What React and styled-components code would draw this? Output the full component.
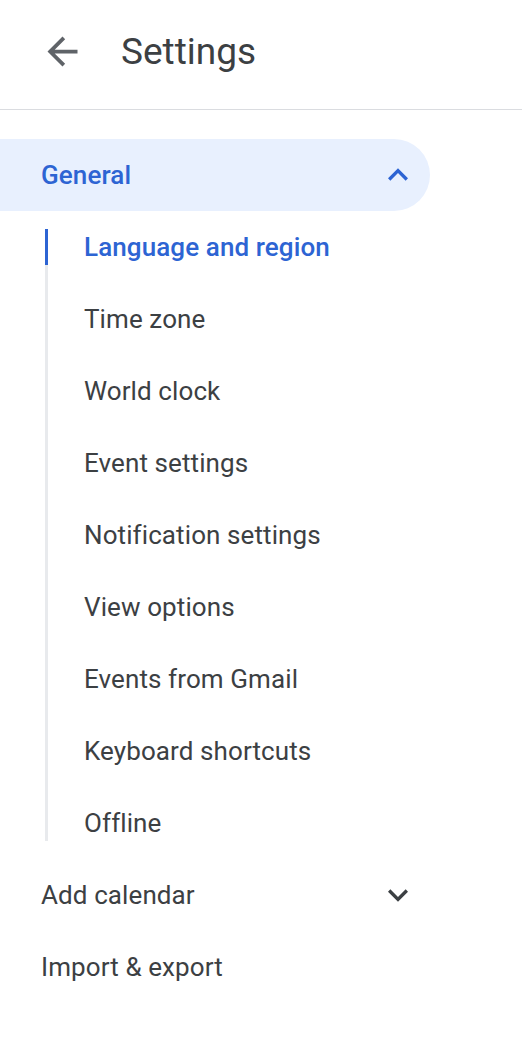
import React from "react";
import styled, { createGlobalStyle } from "styled-components";

const GlobalStyle = createGlobalStyle`
  html, body { margin: 0; padding: 0; background: #ffffff; }
  body { font-family: Roboto, "Noto Sans", Arial, sans-serif; -webkit-font-smoothing: antialiased; }
  * { box-sizing: border-box; }
`;

const Page = styled.div`
  width: 522px;
  min-height: 1042px;
  background: #fff;
`;

const Header = styled.header`
  height: 110px;
  padding: 0 0 6px 38px;
  display: flex;
  align-items: center;
  border-bottom: 1px solid #dadce0;
`;

const IconButton = styled.button`
  width: 48px;
  height: 48px;
  padding: 0;
  border: 0;
  background: transparent;
  display: flex;
  align-items: center;
  justify-content: center;
  color: #5f6368;
  cursor: pointer;
`;

const Title = styled.h1`
  margin: 0 0 0 35px;
  font-family: Roboto, "Noto Sans", Arial, sans-serif;
  font-weight: 400;
  font-size: 37px;
  color: #3c4043;
  letter-spacing: 0;
`;

const Nav = styled.nav`
  padding-top: 29px;
  display: flex;
  flex-direction: column;
`;

const SectionRow = styled.div`
  width: 430px;
  height: 72px;
  padding: 0 12px 0 41px;
  display: flex;
  align-items: center;
  justify-content: space-between;
  border-radius: 0 36px 36px 0;
  background: ${(p) => (p.$open ? "#e8f0fe" : "transparent")};
  color: ${(p) => (p.$open ? "#2d64d3" : "#3c4043")};
  font-size: 26px;
  font-weight: ${(p) => (p.$open ? 500 : 400)};
  letter-spacing: 0.1px;
`;

const SubList = styled.ul`
  list-style: none;
  margin: 18px 0 18px 45px;
  padding: 0;
  border-left: 3px solid #e8eaed;
  display: flex;
  flex-direction: column;
  gap: 36px;
`;

const SubItem = styled.li`
  position: relative;
  height: 36px;
  padding-left: 36px;
  display: flex;
  align-items: center;
  font-size: 26px;
  letter-spacing: 0.1px;
  color: ${(p) => (p.$active ? "#2d64d3" : "#3c4043")};
  font-weight: ${(p) => (p.$active ? 500 : 400)};
  &::before {
    content: "";
    display: ${(p) => (p.$active ? "block" : "none")};
    position: absolute;
    left: -3px;
    top: 0;
    width: 3px;
    height: 100%;
    background: #2d64d3;
  }
`;

const Chevron = styled.svg`
  width: 40px;
  height: 40px;
  fill: currentColor;
  flex-shrink: 0;
`;

const ArrowBack = () => (
  <svg width="45" height="45" viewBox="0 0 24 24" fill="currentColor">
    <path d="M20 11H7.83l5.59-5.59L12 4l-8 8 8 8 1.41-1.41L7.83 13H20v-2z" />
  </svg>
);

const ExpandLess = () => (
  <Chevron viewBox="0 0 24 24">
    <path d="M12 8l-6 6 1.41 1.41L12 10.83l4.59 4.58L18 14z" />
  </Chevron>
);

const ExpandMore = () => (
  <Chevron viewBox="0 0 24 24">
    <path d="M16.59 8.59L12 13.17 7.41 8.59 6 10l6 6 6-6z" />
  </Chevron>
);

const items = [
  "Language and region",
  "Time zone",
  "World clock",
  "Event settings",
  "Notification settings",
  "View options",
  "Events from Gmail",
  "Keyboard shortcuts",
  "Offline",
];

export default function App() {
  return (
    <Page>
      <GlobalStyle />
      <Header>
        <IconButton aria-label="Back">
          <ArrowBack />
        </IconButton>
        <Title>Settings</Title>
      </Header>
      <Nav>
        <SectionRow $open>
          <span>General</span>
          <ExpandLess />
        </SectionRow>
        <SubList>
          {items.map((t, i) => (
            <SubItem key={t} $active={i === 0}>
              {t}
            </SubItem>
          ))}
        </SubList>
        <SectionRow>
          <span>Add calendar</span>
          <ExpandMore />
        </SectionRow>
        <SectionRow>
          <span>Import &amp; export</span>
        </SectionRow>
      </Nav>
    </Page>
  );
}
